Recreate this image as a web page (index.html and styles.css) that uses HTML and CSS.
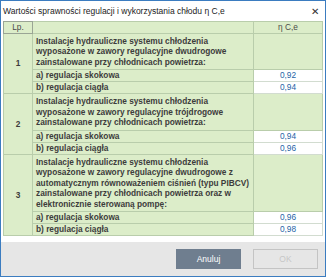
FILE: index.html
```html
<!DOCTYPE html>
<html lang="pl">
<head>
    <meta charset="UTF-8">
    <title>Wartości sprawności regulacji</title>
    <link rel="stylesheet" href="styles.css">
</head>
<body>

<div class="window">
    <div class="titlebar">
        <span class="title">Wartości sprawności regulacji i wykorzystania chłodu η C,e</span>
        <span class="close">&#x2715;</span>
    </div>

    <div class="content">
        <table class="grid">
            <tr class="head">
                <th class="lp">Lp.</th>
                <th class="desc"></th>
                <th class="val">η C,e</th>
            </tr>

            <tr>
                <td class="num" rowspan="3">1</td>
                <td class="group">Instalacje hydrauliczne systemu chłodzenia wyposażone w zawory regulacyjne dwudrogowe zainstalowane przy chłodnicach powietrza:</td>
                <td class="empty"></td>
            </tr>
            <tr class="sub">
                <td>a) regulacja skokowa</td>
                <td class="value">0,92</td>
            </tr>
            <tr class="sub">
                <td>b) regulacja ciągła</td>
                <td class="value">0,94</td>
            </tr>

            <tr>
                <td class="num" rowspan="3">2</td>
                <td class="group">Instalacje hydrauliczne systemu chłodzenia wyposażone w zawory regulacyjne trójdrogowe zainstalowane przy chłodnicach powietrza:</td>
                <td class="empty"></td>
            </tr>
            <tr class="sub">
                <td>a) regulacja skokowa</td>
                <td class="value">0,94</td>
            </tr>
            <tr class="sub">
                <td>b) regulacja ciągła</td>
                <td class="value">0,96</td>
            </tr>

            <tr>
                <td class="num" rowspan="3">3</td>
                <td class="group">Instalacje hydrauliczne systemu chłodzenia wyposażone w zawory regulacyjne dwudrogowe z automatycznym równoważeniem ciśnień (typu PIBCV) zainstalowane przy chłodnicach powietrza oraz w elektronicznie sterowaną pompę:</td>
                <td class="empty"></td>
            </tr>
            <tr class="sub">
                <td>a) regulacja skokowa</td>
                <td class="value">0,96</td>
            </tr>
            <tr class="sub">
                <td>b) regulacja ciągła</td>
                <td class="value">0,98</td>
            </tr>
        </table>
    </div>

    <div class="footer">
        <button class="btn btn-cancel">Anuluj</button>
        <button class="btn btn-ok" disabled>OK</button>
    </div>
</div>

</body>
</html>
```

FILE: styles.css
```css
html, body {
    margin: 0;
    padding: 0;
    background: #fff;
}

.window {
    width: 326px;
    height: 277px;
    box-sizing: border-box;
    border: 1px solid #3b7cc0;
    display: flex;
    flex-direction: column;
    font-family: "Liberation Sans", Arial, sans-serif;
    background: #fff;
}

.titlebar {
    height: 20px;
    flex-shrink: 0;
    display: flex;
    align-items: center;
    justify-content: space-between;
    padding: 0 6px 0 2px;
    color: #222;
}

.title {
    font-size: 8.5px;
}

.close {
    font-size: 10px;
    color: #333;
}

.content {
    flex: 1;
    min-height: 0;
    padding: 0 2px;
}

.grid {
    width: 100%;
    border-collapse: collapse;
    font-size: 8.3px;
    line-height: 10.5px;
    font-weight: bold;
    color: #3c3c3c;
    background: #dcedc9;
}

.grid th,
.grid td {
    border: 1px solid #b9cdab;
    padding: 0 3px;
}

.grid .head th {
    height: 10px;
    font-weight: normal;
    color: #4a4a4a;
}

.grid th.lp {
    width: 22px;
    border: 1px solid #9aa595;
}

.grid th.val {
    width: 62px;
}

.grid td.num {
    text-align: center;
    vertical-align: middle;
}

.grid td.group {
    padding: 2px 3px;
}

.grid tr.sub td {
    height: 11px;
    padding: 0 3px;
}

.grid td.value {
    background: #fff;
    border-color: #d2dcd0;
    text-align: center;
    font-weight: normal;
    color: #2563a6;
}

.footer {
    height: 34px;
    flex-shrink: 0;
    background: #e6e6e6;
    display: flex;
    align-items: center;
    justify-content: flex-end;
    gap: 12px;
    padding-right: 7px;
}

.btn {
    width: 65px;
    height: 20px;
    font-family: "Liberation Sans", Arial, sans-serif;
    font-size: 8.5px;
    border: 1px solid #6f7e8f;
}

.btn-cancel {
    background: #6f7e8f;
    color: #fff;
}

.btn-ok {
    background: #e6e6e6;
    border-color: #c4c4c4;
    color: #c6c6c6;
}
```
